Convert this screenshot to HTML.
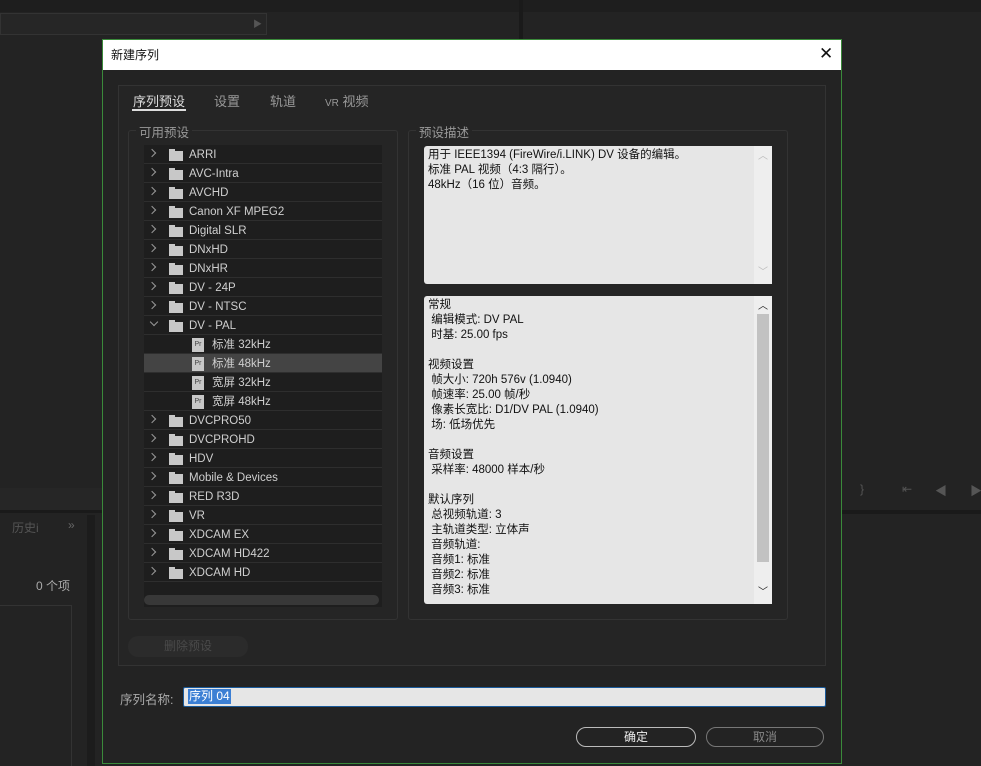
<!DOCTYPE html>
<html><head><meta charset="utf-8"><style>
*{margin:0;padding:0;box-sizing:border-box}
body{width:981px;height:766px;background:#232323;position:relative;overflow:hidden;font-family:"Liberation Sans","Noto Sans CJK SC",sans-serif;font-size:12px;color:#c8c8c8}
.a{position:absolute}
.row{position:absolute;left:0;width:238px;height:19px;border-bottom:1px solid #2e2e2e;line-height:20px;color:#cfcfcf;font-size:11.5px}
.row .chev{position:absolute;left:5px;top:5px;width:6px;height:6px;border-right:1px solid #999;border-top:1px solid #999;transform:rotate(45deg)}
.row .chev.dn{left:7px;top:3px;transform:rotate(135deg)}
.row .fd{position:absolute;left:25px;top:6px;width:14px;height:10px;background:#c8c8c8}
.row .fd:before{content:"";position:absolute;left:0;top:-2px;width:6px;height:2px;background:#c8c8c8}
.row .t{position:absolute;left:45px}
.row .pr{position:absolute;left:48px;top:3px;width:12px;height:14px;background:#c8c8c8;color:#444;font-size:7px;line-height:14px;text-align:center}
.row .t2{position:absolute;left:68px}
.txt{font-family:"Liberation Sans","Noto Sans CJK SC",sans-serif;color:#111;font-size:11.5px;line-height:15px}
</style></head><body>
<div class="a" style="left:0;top:0;width:981px;height:12px;background:#1e1e1e"></div>
<div class="a" style="left:0;top:13px;width:267px;height:22px;background:#262626;border:1px solid #333"></div>
<div class="a" style="left:253px;top:17px;color:#555;font-size:9px">▶</div>
<div class="a" style="left:519px;top:0;width:4px;height:40px;background:#1a1a1a"></div>
<div class="a" style="left:0;top:488px;width:102px;height:22px;background:#262626"></div>
<div class="a" style="left:0;top:510px;width:102px;height:3px;background:#1a1a1a"></div>
<div class="a" style="left:12px;top:519px;color:#555">历史i</div>
<div class="a" style="left:68px;top:518px;color:#666">»</div>
<div class="a" style="left:36px;top:577px;color:#aaa">0 个项</div>
<div class="a" style="left:0;top:605px;width:72px;height:161px;border-right:1px solid #333;border-top:1px solid #333"></div>
<div class="a" style="left:87px;top:515px;width:8px;height:251px;background:#1c1c1c"></div>
<div class="a" style="left:842px;top:510px;width:139px;height:4px;background:#1a1a1a"></div>
<div class="a" style="left:860px;top:482px;color:#555;font-size:12px">}</div>
<div class="a" style="left:902px;top:482px;color:#555;font-size:12px">⇤</div>
<div class="a" style="left:935px;top:482px;color:#555;font-size:12px">◀</div>
<div class="a" style="left:970px;top:482px;color:#555;font-size:12px">▶</div>
<div class="a" style="left:102px;top:39px;width:740px;height:725px;background:#232323;border:1px solid #3a8a3a"></div>
<div class="a" style="left:103px;top:40px;width:738px;height:30px;background:#fff"></div>
<div class="a" style="left:111px;top:46px;color:#111;font-size:12px">新建序列</div>
<div class="a" style="left:819px;top:44px;color:#111;font-size:17px">✕</div>
<div class="a" style="left:118px;top:85px;width:708px;height:581px;border:1px solid #333;background:#252525"></div>
<div class="a" style="left:133px;top:91px;color:#ddd;font-size:13px">序列预设</div>
<div class="a" style="left:132px;top:109px;width:54px;height:2px;background:#ddd"></div>
<div class="a" style="left:214px;top:91px;color:#999;font-size:13px">设置</div>
<div class="a" style="left:270px;top:91px;color:#999;font-size:13px">轨道</div>
<div class="a" style="left:325px;top:91px;color:#999;font-size:13px"><span style="font-size:10px">VR</span> 视频</div>
<div class="a" style="left:128px;top:130px;width:270px;height:490px;border:1px solid #333;border-radius:3px"></div>
<div class="a" style="left:136px;top:122px;background:#252525;padding:0 3px;color:#999;font-size:12.5px">可用预设</div>
<div class="a" style="left:144px;top:145px;width:238px;height:462px;background:#1e1e1e">
<div class="row" style="top:0"><span class="chev"></span><span class="fd"></span><span class="t">ARRI</span></div>
<div class="row" style="top:19px"><span class="chev"></span><span class="fd"></span><span class="t">AVC-Intra</span></div>
<div class="row" style="top:38px"><span class="chev"></span><span class="fd"></span><span class="t">AVCHD</span></div>
<div class="row" style="top:57px"><span class="chev"></span><span class="fd"></span><span class="t">Canon XF MPEG2</span></div>
<div class="row" style="top:76px"><span class="chev"></span><span class="fd"></span><span class="t">Digital SLR</span></div>
<div class="row" style="top:95px"><span class="chev"></span><span class="fd"></span><span class="t">DNxHD</span></div>
<div class="row" style="top:114px"><span class="chev"></span><span class="fd"></span><span class="t">DNxHR</span></div>
<div class="row" style="top:133px"><span class="chev"></span><span class="fd"></span><span class="t">DV - 24P</span></div>
<div class="row" style="top:152px"><span class="chev"></span><span class="fd"></span><span class="t">DV - NTSC</span></div>
<div class="row" style="top:171px"><span class="chev dn"></span><span class="fd"></span><span class="t">DV - PAL</span></div>
<div class="row" style="top:190px"><span class="pr">Pr</span><span class="t2">标准 32kHz</span></div>
<div class="row" style="top:209px;background:#444"><span class="pr">Pr</span><span class="t2">标准 48kHz</span></div>
<div class="row" style="top:228px"><span class="pr">Pr</span><span class="t2">宽屏 32kHz</span></div>
<div class="row" style="top:247px"><span class="pr">Pr</span><span class="t2">宽屏 48kHz</span></div>
<div class="row" style="top:266px"><span class="chev"></span><span class="fd"></span><span class="t">DVCPRO50</span></div>
<div class="row" style="top:285px"><span class="chev"></span><span class="fd"></span><span class="t">DVCPROHD</span></div>
<div class="row" style="top:304px"><span class="chev"></span><span class="fd"></span><span class="t">HDV</span></div>
<div class="row" style="top:323px"><span class="chev"></span><span class="fd"></span><span class="t">Mobile &amp; Devices</span></div>
<div class="row" style="top:342px"><span class="chev"></span><span class="fd"></span><span class="t">RED R3D</span></div>
<div class="row" style="top:361px"><span class="chev"></span><span class="fd"></span><span class="t">VR</span></div>
<div class="row" style="top:380px"><span class="chev"></span><span class="fd"></span><span class="t">XDCAM EX</span></div>
<div class="row" style="top:399px"><span class="chev"></span><span class="fd"></span><span class="t">XDCAM HD422</span></div>
<div class="row" style="top:418px"><span class="chev"></span><span class="fd"></span><span class="t">XDCAM HD</span></div>
<div class="a" style="left:0;top:450px;width:235px;height:10px;background:#383838;border-radius:5px"></div>
</div>
<div class="a" style="left:408px;top:130px;width:380px;height:490px;border:1px solid #333;border-radius:3px"></div>
<div class="a" style="left:416px;top:122px;background:#252525;padding:0 3px;color:#999;font-size:12.5px">预设描述</div>
<div class="a txt" style="left:424px;top:146px;width:348px;height:138px;background:#e6e6e6;border-radius:3px;padding:2px 4px">用于 IEEE1394 (FireWire/i.LINK) DV 设备的编辑。<br>标准 PAL 视频（4:3 隔行）。<br>48kHz（16 位）音频。
<div class="a" style="right:0;top:0;width:18px;height:138px;background:#eee;color:#bbb;font-size:10px;text-align:center;padding-top:3px">︿<div style="position:absolute;bottom:4px;width:18px">﹀</div></div></div>
<div class="a txt" style="left:424px;top:296px;width:348px;height:308px;background:#e6e6e6;border-radius:3px;padding:2px 4px">常规<br>&nbsp;编辑模式: DV PAL<br>&nbsp;时基: 25.00 fps<br><br>视频设置<br>&nbsp;帧大小: 720h 576v (1.0940)<br>&nbsp;帧速率: 25.00 帧/秒<br>&nbsp;像素长宽比: D1/DV PAL (1.0940)<br>&nbsp;场: 低场优先<br><br>音频设置<br>&nbsp;采样率: 48000 样本/秒<br><br>默认序列<br>&nbsp;总视频轨道: 3<br>&nbsp;主轨道类型: 立体声<br>&nbsp;音频轨道:<br>&nbsp;音频1: 标准<br>&nbsp;音频2: 标准<br>&nbsp;音频3: 标准
<div class="a" style="right:0;top:0;width:18px;height:308px;background:#eee;color:#222;font-size:10px;text-align:center;padding-top:3px">︿<div style="position:absolute;left:3px;top:18px;width:12px;height:248px;background:#c2c2c2"></div><div style="position:absolute;bottom:4px;width:18px">﹀</div></div></div>
<div class="a" style="left:128px;top:636px;width:120px;height:21px;background:#2b2b2b;border-radius:10px;color:#4a4a4a;text-align:center;line-height:21px">删除预设</div>
<div class="a" style="left:120px;top:689px;color:#aaa;font-size:12.5px">序列名称:</div>
<div class="a" style="left:183px;top:687px;width:643px;height:20px;background:#e6e6e6;border:1px solid #1a5a9a;border-radius:2px"></div>
<div class="a" style="left:188px;top:689px;background:#3b7fd4;color:#fff;font-size:12px;padding:0 1px;line-height:15px">序列 04</div>
<div class="a" style="left:576px;top:727px;width:120px;height:20px;border:1px solid #bbb;border-radius:10px;color:#eee;text-align:center;line-height:18px">确定</div>
<div class="a" style="left:706px;top:727px;width:118px;height:20px;border:1px solid #777;border-radius:10px;color:#888;text-align:center;line-height:18px">取消</div>
</body></html>
